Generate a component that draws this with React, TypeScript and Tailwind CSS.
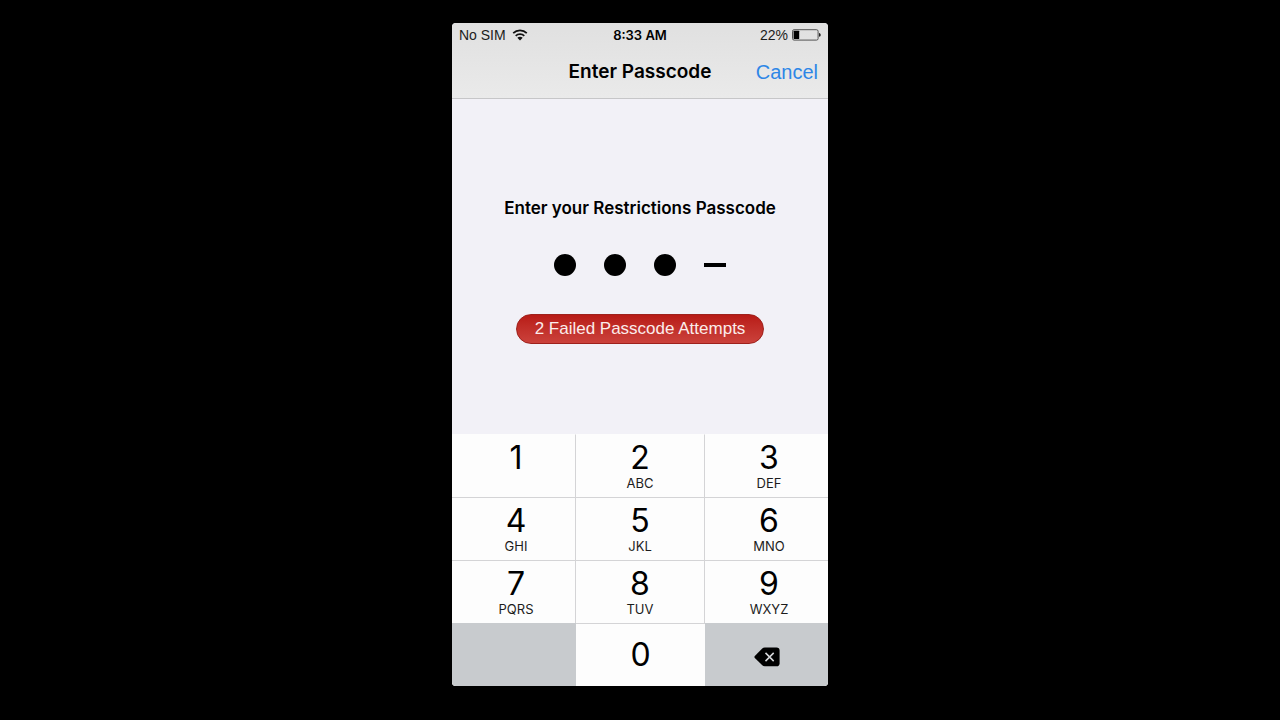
import { useState } from "react";

const KEYS = [
  { digit: "1", letters: "" },
  { digit: "2", letters: "ABC" },
  { digit: "3", letters: "DEF" },
  { digit: "4", letters: "GHI" },
  { digit: "5", letters: "JKL" },
  { digit: "6", letters: "MNO" },
  { digit: "7", letters: "PQRS" },
  { digit: "8", letters: "TUV" },
  { digit: "9", letters: "WXYZ" },
];

const PASSCODE_LENGTH = 4;

function WifiIcon() {
  return (
    <svg viewBox="0 0 16 12" className="h-3 w-4" fill="none" stroke="#111" strokeWidth="1.7" aria-hidden="true">
      <path d="M1.200 4.200C5 .4 11 .4 14.800 4.200" />
      <path d="M3.700 6.800c2.400-2.300 6.200-2.300 8.600 0" />
      <path d="M5.300 8.800c1.500-1.500 3.900-1.500 5.400 0L8 11.600z" fill="#111" stroke="none" />
    </svg>
  );
}

function BatteryIcon() {
  return (
    <svg viewBox="0 0 29 12" className="h-3 w-[29px]" aria-hidden="true">
      <rect x=".5" y=".7" width="25.600" height="10.400" rx="1.600" fill="none" stroke="#444" strokeWidth=".9" />
      <rect x="1.600" y="1.800" width="5.600" height="8.200" rx=".5" fill="#000" />
      <path d="M27 4c1.200.3 1.700 1 1.700 1.900S28.200 7.500 27 7.800z" fill="#222" />
    </svg>
  );
}

function BackspaceIcon() {
  return (
    <svg viewBox="0 0 26 20" className="h-5 w-[26px]" aria-hidden="true">
      <path d="M.8 9.100 8 1.700Q9.200.6 10.800.6H22.500Q25.600.6 25.600 3.700V16.200Q25.600 19.300 22.500 19.300H10.800Q9.200 19.300 8 18.100L.8 10.900Q0 10 .8 9.100z" fill="#000" />
      <path d="M11.500 5.900l8.200 8.200M19.700 5.900l-8.200 8.200" stroke="#d5d7da" strokeWidth="1.500" fill="none" />
    </svg>
  );
}

export default function App() {
  const [count, setCount] = useState(3);
  const press = () => setCount((n) => Math.min(PASSCODE_LENGTH, n + 1));

  return (
    <div className="flex min-h-screen flex-col items-center bg-black py-[23px] font-['Liberation_Sans',Arial,sans-serif] text-black">
      <main className="flex w-full max-w-[376px] flex-col overflow-hidden rounded-[4px] bg-[#f2f1f7]">
        <header className="border-b border-[#c6c6c8] bg-linear-to-b from-[#e0e0e0] to-[#eaeaea]">
          <div className="grid grid-cols-3 items-center px-[7px] pt-1 text-sm leading-4 text-[#1c1c1c]">
            <div className="flex items-center gap-1.5">
              <span>No SIM</span>
              <WifiIcon />
            </div>
            <time className="text-center font-['Inter',sans-serif] text-[13px] font-semibold text-black">8:33 AM</time>
            <div className="flex items-center justify-end gap-1">
              <span>22%</span>
              <BatteryIcon />
            </div>
          </div>
          <div className="grid grid-cols-[1fr_auto_1fr] items-center px-2.5 pt-[17px] pb-3.5 leading-6">
            <h1 className="col-start-2 font-['Inter',sans-serif] text-[19px] font-semibold">Enter Passcode</h1>
            <button type="button" className="justify-self-end text-xl leading-6 text-[#2e86e6]">
              Cancel
            </button>
          </div>
        </header>

        <section className="flex flex-col items-center pt-[97px] pb-[90px]">
          <h2 className="font-['Inter',sans-serif] text-[17px] leading-6 font-semibold">
            Enter your Restrictions Passcode
          </h2>
          <div
            role="img"
            aria-label={`${count} of ${PASSCODE_LENGTH} digits entered`}
            className="mt-[34px] flex h-[22px] items-center gap-7"
          >
            {Array.from({ length: PASSCODE_LENGTH }, (_, i) =>
              i < count ? (
                <span key={i} className="h-[22px] w-[22px] rounded-full bg-black" />
              ) : (
                <span key={i} className="h-1 w-[22px] bg-black" />
              ),
            )}
          </div>
          <p className="mt-[38px] rounded-full border border-[#9e211c] bg-linear-to-b from-[#b81a16] to-[#cb413b] px-[18px] text-[17px] leading-7 text-[#fbeceb]">
            2 Failed Passcode Attempts
          </p>
        </section>

        <div className="grid grid-cols-[124fr_129fr_123fr] bg-[#fdfdfd] font-['Inter',sans-serif]">
          {KEYS.map(({ digit, letters }) => (
            <button
              key={digit}
              type="button"
              onClick={press}
              className="flex h-[63px] flex-col items-center border-t border-r border-[#d4d4d6] pt-1.5 pl-[5px] nth-[-n+3]:border-t-transparent nth-[3n]:border-r-0 nth-[3n+2]:pl-0"
            >
              <span className="text-[32px] leading-[34px]">{digit}</span>
              <span className="text-[13px] leading-4 text-[#1c1c1c]">{letters}</span>
            </button>
          ))}
          <div className="bg-[#c8cbce]" />
          <button
            type="button"
            onClick={press}
            className="flex h-[63px] items-center justify-center border-t border-[#d4d4d6] text-[32px]"
          >
            0
          </button>
          <button
            type="button"
            aria-label="Delete"
            onClick={() => setCount((n) => Math.max(0, n - 1))}
            className="flex items-center justify-center bg-[#c8cbce] pt-1"
          >
            <BackspaceIcon />
          </button>
        </div>
      </main>
    </div>
  );
}
